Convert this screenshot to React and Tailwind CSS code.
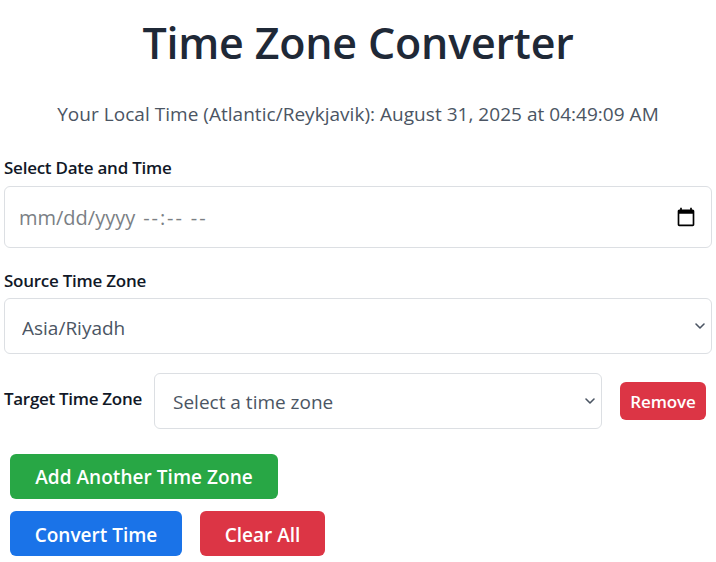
import React from 'react';

const font = "font-['Open_Sans','Noto_Sans',sans-serif]";

function Chevron() {
  return (
    <svg className="pointer-events-none absolute right-[4px] top-1/2 -translate-y-1/2" width="16" height="16" viewBox="0 0 20 20" fill="none">
      <path d="M5 7.5l5 5 5-5" stroke="#4b5563" strokeWidth="2" strokeLinecap="round" strokeLinejoin="round" />
    </svg>
  );
}

function App() {
  return (
    <div className={`${font} w-[716px] h-[562px] overflow-hidden bg-white px-[4px]`}>
      <h1 className="h-[86px] pt-[14px] text-center text-[43px] leading-[58px] font-semibold text-[#1f2937] tracking-[-0.2px]">Time Zone Converter</h1>
      <p className="mt-[14px] text-center text-[19px] leading-[28px] text-[#4b5563] tracking-[0.03px]">Your Local Time (Atlantic/Reykjavik): August 31, 2025 at 04:49:09 AM</p>

      <label className="mt-[28px] block text-[17px] leading-[24px] font-semibold text-[#111827] tracking-[-0.25px]">Select Date and Time</label>
      <div className="mt-[6px] flex h-[62px] w-[708px] items-center justify-between rounded-[6px] border border-[#dcdfe3] bg-white pl-[14px] pr-[15px] text-[20px] text-[#7b7f85]">
        <div className="flex gap-[8px] pt-[2px]">
          <span>mm/dd/yyyy</span>
          <span className="tracking-[1.9px]">--:-- --</span>
        </div>
        <svg width="20" height="20" viewBox="0 0 24 24" fill="#000000">
          <path d="M20 3h-1V1h-2v2H7V1H5v2H4c-1.1 0-2 .9-2 2v16c0 1.1.9 2 2 2h16c1.1 0 2-.9 2-2V5c0-1.1-.9-2-2-2zm0 18H4V8h16v13z" />
        </svg>
      </div>

      <label className="mt-[21px] block text-[17px] leading-[24px] font-semibold text-[#111827] tracking-[-0.25px]">Source Time Zone</label>
      <div className="relative mt-[5px] w-[708px]">
        <select defaultValue="Asia/Riyadh" className="block h-[56px] w-full appearance-none rounded-[6px] border border-[#dcdfe3] bg-white px-[17px] pt-[4px] text-[19px] text-[#4b5563]">
          <option>Asia/Riyadh</option>
        </select>
        <Chevron />
      </div>

      <div className="mt-[19px] flex items-center">
        <label className="w-[150px] -mt-[4px] text-[17px] leading-[24px] font-semibold text-[#111827] tracking-[-0.3px]">Target Time Zone</label>
        <div className="relative w-[448px]">
          <select className="block h-[56px] w-full appearance-none rounded-[6px] border border-[#dcdfe3] bg-white px-[18px] pt-[2px] text-[19px] text-[#4b5563]">
            <option>Select a time zone</option>
          </select>
          <Chevron />
        </div>
        <button className="ml-[18px] h-[38px] w-[86px] rounded-[6px] bg-[#dc3545] pt-[2px] text-[17px] font-semibold text-white tracking-[-0.1px]">Remove</button>
      </div>

      <div className="mt-[25px] pl-[6px]">
        <button className="block h-[45px] w-[268px] rounded-[6px] bg-[#28a745] pt-[2px] text-[19px] font-semibold text-white tracking-[0.05px]">Add Another Time Zone</button>
        <div className="mt-[12px] flex gap-[18px]">
          <button className="h-[45px] w-[172px] rounded-[6px] bg-[#1a73e8] pt-[3px] text-[19px] font-semibold text-white">Convert Time</button>
          <button className="h-[45px] w-[125px] rounded-[6px] bg-[#dc3545] pt-[3px] text-[19px] font-semibold text-white">Clear All</button>
        </div>
      </div>
    </div>
  );
}

export default App;
